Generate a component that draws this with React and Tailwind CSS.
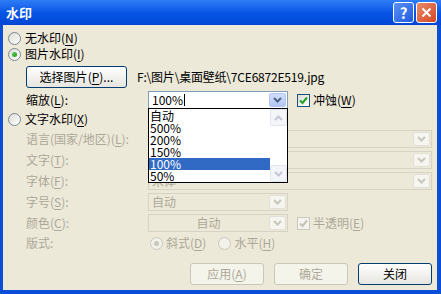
import React from 'react'

const Mn = ({ k }) => (
  <span>
    (<span className="underline underline-offset-2">{k}</span>)
  </span>
)

const Chevron = ({ color }) => (
  <svg width="9" height="6" viewBox="0 0 9 6">
    <path d="M1 1l3.5 3.5L8 1" fill="none" stroke={color} strokeWidth="2" />
  </svg>
)

const Radio = ({ checked, disabled }) => (
  <span
    className={`flex h-[13px] w-[13px] shrink-0 items-center justify-center rounded-full border ${
      disabled ? 'border-[#CAC8BB] bg-[#F2F1EA]' : 'border-[#7C8898] bg-gradient-to-br from-[#DCDCD5] to-white'
    }`}
  >
    {checked && (
      <span
        className={`h-[5px] w-[5px] rounded-full ${disabled ? 'bg-[#CAC8BB]' : 'bg-gradient-to-br from-[#55D355] to-[#1E9A1E]'}`}
      />
    )}
  </span>
)

const Check = ({ disabled }) => (
  <span
    className={`flex h-[13px] w-[13px] shrink-0 items-center justify-center border ${
      disabled ? 'border-[#CAC8BB] bg-[#F4F3EE]' : 'border-[#1C5180] bg-gradient-to-br from-[#DCDCD5] to-white'
    }`}
  >
    <svg width="9" height="9" viewBox="0 0 9 9">
      <path d="M1 4.5l2.5 2.5L8 1.5" fill="none" stroke={disabled ? '#C4C2B4' : '#21A121'} strokeWidth="2" />
    </svg>
  </span>
)

const Combo = ({ w, text, disabled, center, caret }) => (
  <div
    className={`flex h-[18px] ${w} items-center border ${
      disabled ? 'border-[#D6D3C6] bg-[#ECE9D8]' : 'border-[#7F9DB9] bg-white'
    }`}
  >
    <div
      className={`flex h-full flex-1 items-center px-[3px] text-[12px] leading-none ${
        disabled ? 'text-[#ACA899]' : 'text-black'
      } ${center ? 'justify-center' : ''}`}
    >
      {text}
      {caret && <span className="ml-px h-[12px] w-px bg-black" />}
    </div>
    <div
      className={`m-px flex h-[14px] w-[17px] items-center justify-center rounded-[2px] border ${
        disabled
          ? 'border-[#E2E0D6] bg-[#F6F5F0]'
          : 'border-[#B4C6F0] bg-gradient-to-b from-[#D2DEFB] to-[#B3C7F5]'
      }`}
    >
      <Chevron color={disabled ? '#C9C7BA' : '#4D6185'} />
    </div>
  </div>
)

const Label = ({ children, disabled }) => (
  <div className={`w-[122px] shrink-0 text-[12px] leading-none ${disabled ? 'text-[#ACA899]' : 'text-black'}`}>
    {children}
  </div>
)

const XpButton = ({ children, disabled, w = 'w-[74px]' }) => (
  <div
    className={`flex h-[22px] ${w} shrink-0 items-center justify-center whitespace-nowrap rounded-[3px] border text-[12px] leading-none ${
      disabled
        ? 'border-[#C9C7BA] bg-[#F5F4EA] text-[#ACA899]'
        : 'border-[#003C74] bg-gradient-to-b from-white to-[#E6E5DF] text-black'
    }`}
  >
    {children}
  </div>
)

const ScrollArrow = ({ up }) => (
  <div className="flex h-[17px] w-[17px] items-center justify-center rounded-[2px] border border-[#E4E6EE] bg-[#F4F5F8]">
    <svg width="9" height="6" viewBox="0 0 9 6" className={up ? 'rotate-180' : ''}>
      <path d="M1 1l3.5 3.5L8 1" fill="none" stroke="#C3C8D6" strokeWidth="2" />
    </svg>
  </div>
)

const items = ['自动', '500%', '200%', '150%', '100%', '50%']

export default function App() {
  return (
    <div className="flex h-[294px] w-[441px] flex-col bg-[#0A4ED8] font-['Noto_Sans_CJK_SC',sans-serif]">
      {/* title bar */}
      <div className="flex h-[25px] shrink-0 items-center bg-gradient-to-b from-[#2E7CF5] via-[#0856E6] to-[#0046D4] pl-[6px] pr-[4px]">
        <span className="flex-1 text-[13px] font-bold leading-none text-white">水印</span>
        <div className="flex h-[21px] w-[21px] items-center justify-center rounded-[3px] border border-white bg-gradient-to-br from-[#5B8FF5] to-[#1E5BE0] text-[15px] font-bold leading-none text-white">
          ?
        </div>
        <div className="ml-[2px] flex h-[21px] w-[21px] items-center justify-center rounded-[3px] border border-white bg-gradient-to-br from-[#E98A6A] to-[#D4431C]">
          <svg width="11" height="11" viewBox="0 0 11 11">
            <path d="M1.5 1.5l8 8M9.5 1.5l-8 8" stroke="white" strokeWidth="2" />
          </svg>
        </div>
      </div>

      {/* body */}
      <div className="relative mb-[4px] ml-[3px] mr-[4px] flex flex-1 flex-col bg-[#ECE9D8] pl-[5px] pr-[5px] text-black">
        <div className="mt-[6px] flex h-[14px] items-center gap-[4px] text-[12px] leading-none">
          <Radio />
          <span>无水印<Mn k="N" /></span>
        </div>
        <div className="mt-[2px] flex h-[14px] items-center gap-[4px] text-[12px] leading-none">
          <Radio checked />
          <span>图片水印<Mn k="I" /></span>
        </div>

        <div className="mt-[6px] flex h-[20px] items-center pl-[18px]">
          <XpButton w="w-[101px]">
            选择图片<Mn k="P" />...
          </XpButton>
          <span className="ml-[10px] text-[12px] leading-none tracking-[-0.2px]">F:\图片\桌面壁纸\7CE6872E519.jpg</span>
        </div>

        <div className="mt-[4px] flex h-[18px] items-center pl-[18px]">
          <Label>缩放<Mn k="L" />:</Label>
          <Combo w="w-[140px]" text="100%" caret />
          <div className="ml-[9px] flex items-center gap-[3px] text-[12px] leading-none">
            <Check />
            <span>冲蚀<Mn k="W" /></span>
          </div>
        </div>

        <div className="mt-[3px] flex h-[14px] items-center gap-[4px] text-[12px] leading-none">
          <Radio />
          <span>文字水印<Mn k="X" /></span>
        </div>

        <div className="mt-[4px] flex h-[18px] items-center pl-[18px]">
          <Label disabled>语言(国家/地区)<Mn k="L" />:</Label>
          <Combo w="flex-1" disabled text="" />
        </div>
        <div className="mt-[3px] flex h-[18px] items-center pl-[18px]">
          <Label disabled>文字<Mn k="T" />:</Label>
          <Combo w="flex-1" disabled text="" />
        </div>
        <div className="mt-[3px] flex h-[18px] items-center pl-[18px]">
          <Label disabled>字体<Mn k="F" />:</Label>
          <Combo w="flex-1" disabled text="宋体" />
        </div>
        <div className="mt-[3px] flex h-[18px] items-center pl-[18px]">
          <Label disabled>字号<Mn k="S" />:</Label>
          <Combo w="w-[140px]" disabled text="自动" />
        </div>
        <div className="mt-[3px] flex h-[18px] items-center pl-[18px]">
          <Label disabled>颜色<Mn k="C" />:</Label>
          <Combo w="w-[140px]" disabled text="自动" center />
          <div className="ml-[9px] flex items-center gap-[3px] text-[12px] leading-none text-[#ACA899]">
            <Check disabled />
            <span>半透明<Mn k="E" /></span>
          </div>
        </div>

        <div className="mt-[4px] flex h-[14px] items-center pl-[18px] text-[12px] leading-none text-[#ACA899]">
          <Label disabled>版式:</Label>
          <div className="ml-[2px] flex items-center gap-[3px]">
            <Radio checked disabled />
            <span>斜式<Mn k="D" /></span>
          </div>
          <div className="ml-[12px] flex items-center gap-[3px]">
            <Radio disabled />
            <span>水平<Mn k="H" /></span>
          </div>
        </div>

        <div className="mt-[13px] flex h-[22px] items-center justify-end gap-[10px]">
          <XpButton disabled>应用<Mn k="A" /></XpButton>
          <XpButton disabled>确定</XpButton>
          <XpButton>关闭</XpButton>
        </div>

        {/* open dropdown list */}
        <div className="absolute left-[145px] top-[83px] flex h-[75px] w-[140px] border border-black bg-white">
          <div className="flex flex-1 flex-col pt-px">
            {items.map((it) => (
              <div
                key={it}
                className={`flex h-[12px] items-center pl-px text-[12px] leading-none ${
                  it === '100%' ? 'bg-[#316AC5] text-white' : 'text-black'
                }`}
              >
                {it}
              </div>
            ))}
          </div>
          <div className="flex w-[17px] flex-col justify-between">
            <ScrollArrow up />
            <ScrollArrow />
          </div>
        </div>
      </div>
    </div>
  )
}
